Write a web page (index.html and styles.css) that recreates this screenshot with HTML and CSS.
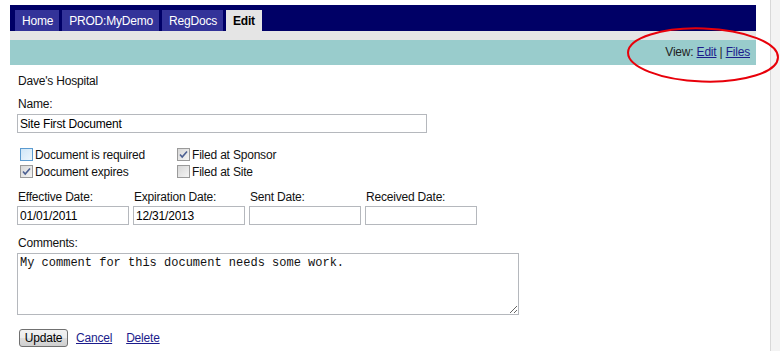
FILE: index.html
```html
<!DOCTYPE html>
<html>
<head>
<meta charset="utf-8">
<title>Edit</title>
<link rel="stylesheet" href="styles.css">
</head>
<body>
<div class="window">
  <div class="page">
    <div class="topbar">
      <nav class="tabs">
        <a class="tab">Home</a>
        <a class="tab">PROD:MyDemo</a>
        <a class="tab">RegDocs</a>
        <a class="tab active">Edit</a>
      </nav>
    </div>
    <div class="strip"></div>
    <div class="viewbar">View: <a href="#">Edit</a> | <a href="#">Files</a></div>
    <form class="content">
      <div class="site">Dave's Hospital</div>
      <div class="field">
        <label class="lbl">Name:</label>
        <input class="txt name" type="text" value="Site First Document">
      </div>
      <div class="checks">
        <label class="chk"><svg class="box hover" width="13" height="13" viewBox="0 0 13 13"><defs><linearGradient id="gh" x1="0" y1="0" x2="1" y2="1"><stop offset="0" stop-color="#cfe6f7"/><stop offset="1" stop-color="#eef7fd"/></linearGradient></defs><rect x="0.5" y="0.5" width="12" height="12" fill="url(#gh)" stroke="#5b9bd0"/></svg>Document is required</label>
        <label class="chk"><svg class="box" width="13" height="13" viewBox="0 0 13 13"><defs><linearGradient id="gd" x1="0" y1="0" x2="1" y2="1"><stop offset="0" stop-color="#d6d6d6"/><stop offset="1" stop-color="#f6f6f6"/></linearGradient></defs><rect x="0.5" y="0.5" width="12" height="12" fill="url(#gd)" stroke="#9a9a9a"/><path d="M3 6.5 L5.2 9 L10 3.5" fill="none" stroke="#4b5f92" stroke-width="1.6"/></svg>Filed at Sponsor</label>
        <label class="chk"><svg class="box" width="13" height="13" viewBox="0 0 13 13"><rect x="0.5" y="0.5" width="12" height="12" fill="url(#gd)" stroke="#9a9a9a"/><path d="M3 6.5 L5.2 9 L10 3.5" fill="none" stroke="#4b5f92" stroke-width="1.6"/></svg>Document expires</label>
        <label class="chk"><svg class="box" width="13" height="13" viewBox="0 0 13 13"><rect x="0.5" y="0.5" width="12" height="12" fill="url(#gd)" stroke="#9a9a9a"/></svg>Filed at Site</label>
      </div>
      <div class="dates">
        <div class="date"><label class="lbl">Effective Date:</label><input class="txt" type="text" value="01/01/2011"></div>
        <div class="date"><label class="lbl">Expiration Date:</label><input class="txt" type="text" value="12/31/2013"></div>
        <div class="date"><label class="lbl">Sent Date:</label><input class="txt" type="text" value=""></div>
        <div class="date"><label class="lbl">Received Date:</label><input class="txt" type="text" value=""></div>
      </div>
      <div class="field comments">
        <label class="lbl">Comments:</label>
        <textarea class="area">My comment for this document needs some work.</textarea>
      </div>
      <div class="actions">
        <button class="btn" type="button">Update</button>
        <a href="#" class="link cancel">Cancel</a>
        <a href="#" class="link">Delete</a>
      </div>
    </form>
  </div>
  <div class="edge"></div>
  <svg class="annot" width="160" height="60" viewBox="0 0 160 60"><ellipse cx="80" cy="30" rx="75" ry="26.5" fill="none" stroke="#e8000a" stroke-width="2" transform="rotate(2 80 30)"/></svg>
</div>
</body>
</html>
```
FILE: styles.css
```css
html, body {
  margin: 0;
  padding: 0;
  background: #fff;
}
body {
  font-family: "Liberation Sans", Arial, sans-serif;
  font-size: 12px;
  line-height: 14px;
  letter-spacing: -0.2px;
  color: #111;
}
.window {
  position: relative;
  display: flex;
  width: 780px;
  height: 351px;
  overflow: hidden;
}
.page {
  width: 746px;
  padding: 5px 0 0 10px;
  flex: none;
}
.edge {
  margin-left: 14px;
  flex: 1;
  border-left: 1px solid #d8d8d8;
  background: #f3f3f3;
}
.topbar {
  background: #000066;
  height: 21px;
  padding: 5px 0 0 5px;
}
.tabs {
  display: flex;
  gap: 3px;
}
.tab {
  display: block;
  height: 21px;
  line-height: 22px;
  padding: 0 6px 0 7px;
  background: #333399;
  color: #fff;
  font-size: 12px;
}
.tab.active {
  background: #e5e5e5;
  color: #000;
  font-weight: bold;
  letter-spacing: -0.2px;
  padding: 0 7px 0 7px;
}
.strip {
  height: 9px;
  background: #e5e5e5;
}
.viewbar {
  height: 25px;
  line-height: 25px;
  background: #99cccc;
  text-align: right;
  padding-right: 6px;
  color: #222;
}
.viewbar a {
  color: #1c1c8c;
  text-decoration: underline;
}
.content {
  padding: 9px 0 0 7px;
}
.site {
  padding-left: 1px;
}
.field {
  margin-top: 9px;
}
.lbl {
  display: block;
  padding-left: 1px;
  margin-bottom: 3px;
}
.txt {
  display: block;
  box-sizing: border-box;
  height: 19px;
  margin: 0;
  padding: 0 2px;
  border: 1px solid #b5b8bd;
  font-family: "Liberation Sans", Arial, sans-serif;
  font-size: 12px;
  letter-spacing: -0.2px;
  color: #000;
  outline: none;
}
.name {
  width: 410px;
}
.checks {
  display: grid;
  grid-template-columns: 157px auto;
  grid-auto-rows: 17px;
  margin-top: 13px;
}
.chk {
  display: flex;
  align-items: center;
  padding-left: 3px;
}
.box {
  display: block;
  margin-right: 2px;
  flex: none;
}
.dates {
  display: grid;
  grid-template-columns: repeat(4, 112px);
  gap: 4px;
  margin-top: 10px;
}
.date .lbl {
  margin-bottom: 2px;
}
.date .txt {
  width: 112px;
}
.comments {
  margin-top: 11px;
}
.area {
  display: block;
  box-sizing: border-box;
  width: 502px;
  height: 62px;
  margin: 0;
  padding: 2px 2px;
  border: 1px solid #b5b8bd;
  font-family: "Liberation Mono", "Courier New", monospace;
  font-size: 12px;
  line-height: 14px;
  letter-spacing: 0;
  color: #111;
  resize: both;
  outline: none;
}
.actions {
  display: flex;
  align-items: center;
  margin-top: 14px;
  padding-left: 2px;
}
.btn {
  box-sizing: border-box;
  width: 49px;
  height: 18px;
  padding: 0;
  margin: 0;
  border: 1px solid #707070;
  border-radius: 3px;
  background: linear-gradient(#f2f2f2, #ebebeb 50%, #dddddd 51%, #cfcfcf);
  font-family: "Liberation Sans", Arial, sans-serif;
  font-size: 12px;
  letter-spacing: -0.2px;
  color: #000;
}
.link {
  color: #1c1c8c;
  text-decoration: underline;
  margin-left: 8px;
}
.cancel + .link {
  margin-left: 14px;
}
.annot {
  position: absolute;
  left: 623px;
  top: 25px;
  pointer-events: none;
}
```
